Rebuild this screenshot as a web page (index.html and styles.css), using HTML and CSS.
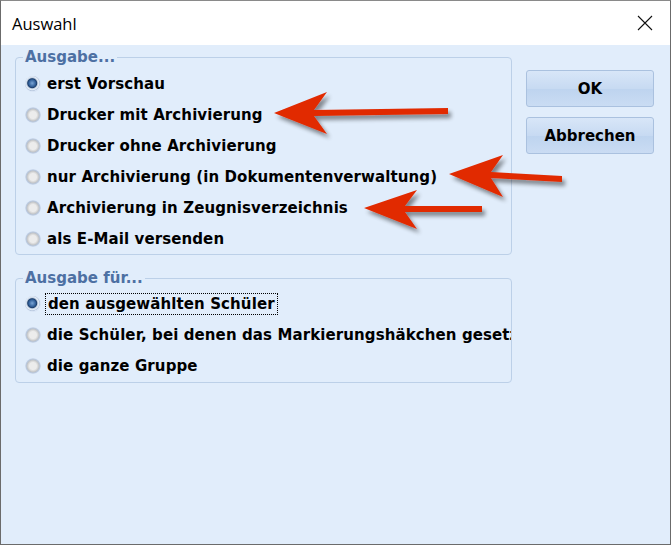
FILE: index.html
```html
<!DOCTYPE html>
<html lang="de">
<head>
  <meta charset="UTF-8" />
  <title>Auswahl</title>
  <link rel="stylesheet" href="styles.css">
</head>
<body>
  <div class="window">
    <!-- Title bar -->
    <div class="titlebar">
      <span class="title">Auswahl</span>
      <svg class="close" width="16" height="16" viewBox="0 0 16 16">
        <path d="M1 1 L15 15 M15 1 L1 15" stroke="#111" stroke-width="1.1" fill="none"/>
      </svg>
    </div>

    <div class="content">
      <div class="groups">
        <fieldset class="group first">
          <legend>Ausgabe...</legend>
          <label class="opt"><span class="radio checked"></span>erst Vorschau</label>
          <label class="opt"><span class="radio"></span>Drucker mit Archivierung</label>
          <label class="opt"><span class="radio"></span>Drucker ohne Archivierung</label>
          <label class="opt"><span class="radio"></span>nur Archivierung (in Dokumentenverwaltung)</label>
          <label class="opt"><span class="radio"></span>Archivierung in Zeugnisverzeichnis</label>
          <label class="opt"><span class="radio"></span>als E-Mail versenden</label>
        </fieldset>

        <fieldset class="group second">
          <legend>Ausgabe für...</legend>
          <label class="opt"><span class="radio checked"></span><span class="focus">den ausgewählten Schüler</span></label>
          <label class="opt"><span class="radio"></span><span class="clip">die Schüler, bei denen das Markierungshäkchen gesetzt ist</span></label>
          <label class="opt"><span class="radio"></span>die ganze Gruppe</label>
        </fieldset>
      </div>

      <div class="buttons">
        <button class="btn">OK</button>
        <button class="btn">Abbrechen</button>
      </div>
    </div>

    <!-- Annotation arrows -->
    <svg class="arrows" width="671" height="545" viewBox="0 0 671 545">
      <defs>
        <filter id="shadow" x="-20%" y="-40%" width="140%" height="180%">
          <feGaussianBlur in="SourceAlpha" stdDeviation="2"/>
          <feOffset dx="3" dy="4" result="b"/>
          <feComponentTransfer><feFuncA type="linear" slope="0.45"/></feComponentTransfer>
          <feMerge><feMergeNode/><feMergeNode in="SourceGraphic"/></feMerge>
        </filter>
      </defs>
      <g fill="#e12a05" filter="url(#shadow)">
        <path d="M274 113 L327 92 L314 110 L448 108 L448 114 L314 116 L327 134 Z"/>
        <path d="M449 174 L503 155 L491 172 L562 176 L562 182 L491 178 L503 197 Z"/>
        <path d="M364 208 L417 190 L405 206 L482 206 L482 212 L405 212 L417 229 Z"/>
      </g>
    </svg>
  </div>
</body>
</html>
```

FILE: styles.css
```css
* {
  box-sizing: border-box;
}

body {
  margin: 0;
  font-family: "DejaVu Sans", Verdana, sans-serif;
}

.window {
  position: relative;
  width: 671px;
  height: 545px;
  border: 1px solid #6b6b6b;
  border-top-color: #8a8a8a;
  background: #e1edfb;
  overflow: hidden;
}

.titlebar {
  height: 44px;
  background: #fff;
  display: flex;
  align-items: center;
  justify-content: space-between;
  padding: 0 17px 0 11px;
}

.title {
  font-family: "Open Sans", "Liberation Sans", sans-serif;
  font-size: 16.5px;
  color: #000;
}

.content {
  display: flex;
  padding: 4px 15px 0 14px;
  gap: 14px;
}

.groups {
  width: 497px;
  display: flex;
  flex-direction: column;
  gap: 15px;
}

.group {
  margin: 0;
  padding: 0 0 0 8px;
  border: 1px solid #bcd0e8;
  border-radius: 4px;
  min-width: 0;
  overflow: hidden;
  white-space: nowrap;
}

.group.first {
  padding-top: 2px;
}

.group.second {
  padding-top: 1px;
  padding-bottom: 1px;
}

.group legend {
  padding: 0 2px;
  margin-left: -1px;
  font-weight: bold;
  font-size: 15px;
  color: #4d70a3;
  line-height: 17px;
}

.opt {
  display: flex;
  align-items: center;
  height: 31px;
  font-weight: bold;
  font-size: 15px;
  color: #000;
  letter-spacing: 0.1px;
}

.radio {
  width: 16px;
  height: 16px;
  border-radius: 50%;
  margin: 0 6px 0 1px;
  flex: none;
  background: radial-gradient(circle, #ececec 0 3.5px, #d6d6d6 5px, #bfc3c8 6px, #b9c9e0 7px, #d8e4f5 8px);
}

.radio.checked {
  background: radial-gradient(circle at 45% 45%, #7aa5d6 0, #2f5d97 3.5px, #1d3e6b 4.5px, #c3d2e4 5.5px, #e8eef6 6.5px, #b9c9e0 7.5px, #d8e4f5 8px);
}

.focus {
  outline: 1px dotted #000;
  outline-offset: 1px;
  padding: 0 1px;
}

.clip {
  overflow: hidden;
}

.buttons {
  display: flex;
  flex-direction: column;
  gap: 10px;
  padding-top: 21px;
}

.btn {
  width: 128px;
  height: 37px;
  border: 1px solid #aac1df;
  border-radius: 3px;
  background: linear-gradient(#d8e6f8, #c7daf2 50%, #bed4ef 52%, #cadcf3);
  font-family: "DejaVu Sans", Verdana, sans-serif;
  font-weight: bold;
  font-size: 15px;
  color: #000;
}

.arrows {
  position: absolute;
  left: -1px;
  top: -1px;
  pointer-events: none;
}
```
